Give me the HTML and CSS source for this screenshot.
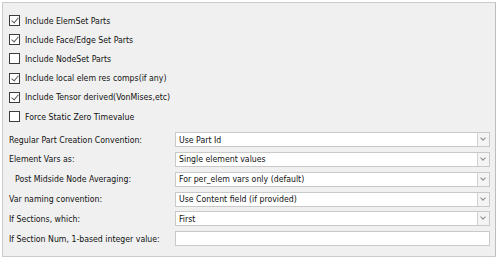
FILE: index.html
```html
<!DOCTYPE html>
<html lang="en">
<head>
    <meta charset="UTF-8">
    <title>Reader options</title>
    <link rel="stylesheet" href="styles.css">
</head>
<body>
    <div class="frame">
        <ul class="checks">
            <li><span class="box checked"></span>Include ElemSet Parts</li>
            <li><span class="box checked"></span>Include Face/Edge Set Parts</li>
            <li><span class="box"></span>Include NodeSet Parts</li>
            <li><span class="box checked"></span>Include local elem res comps(if any)</li>
            <li><span class="box checked"></span>Include Tensor derived(VonMises,etc)</li>
            <li><span class="box"></span>Force Static Zero Timevalue</li>
        </ul>

        <div class="form">
            <label>Regular Part Creation Convention:</label>
            <div class="combo"><span>Use Part Id</span><i></i></div>

            <label>Element Vars as:</label>
            <div class="combo"><span>Single element values</span><i></i></div>

            <label class="indent">Post Midside Node Averaging:</label>
            <div class="combo"><span>For per_elem vars only (default)</span><i></i></div>

            <label>Var naming convention:</label>
            <div class="combo"><span>Use Content field (if provided)</span><i></i></div>

            <label>If Sections, which:</label>
            <div class="combo"><span>First</span><i></i></div>

            <label>If Section Num, 1-based integer value:</label>
            <div class="edit"></div>
        </div>
    </div>
</body>
</html>
```

FILE: styles.css
```css
*{
    margin: 0;
    padding: 0;
    box-sizing: border-box;
    list-style: none;
}
body{
    width: 500px;
    height: 262px;
    background: #fff;
    font-family: "DejaVu Sans Condensed", "DejaVu Sans", sans-serif;
    font-stretch: condensed;
    font-size: 8.7px;
    color: #111;
}
.frame{
    margin: 2px;
    width: 494px;
    height: 255px;
    background: #f0f0f0;
    border: 1px solid #cbcbcb;
    border-right-color: #bdbdbd;
    padding: 8px 5px 0 6px;
}
.checks li{
    height: 19.2px;
    display: flex;
    align-items: center;
}
.box{
    width: 11px;
    height: 11px;
    border: 1px solid #3c3c3c;
    background: #fff;
    margin-right: 5px;
    position: relative;
}
.box.checked::after{
    content: "";
    position: absolute;
    left: 3px;
    top: 0;
    width: 3px;
    height: 6px;
    border: solid #5a5a5a;
    border-width: 0 1px 1px 0;
    transform: rotate(40deg);
}
.form{
    margin-top: 6px;
    display: grid;
    grid-template-columns: 166px 315px;
    grid-auto-rows: 15px;
    row-gap: 4.8px;
    align-items: center;
}
.indent{
    padding-left: 6px;
}
.combo, .edit{
    height: 15px;
    background: #fff;
    border: 1px solid #c9c9c9;
    display: flex;
    align-items: center;
}
.combo span{
    flex: 1;
    padding-left: 3px;
}
.combo i{
    width: 12px;
    height: 13px;
    border-left: 1px solid #d2d2d2;
    background: #f4f4f4;
    position: relative;
}
.combo i::after{
    content: "";
    position: absolute;
    left: 3px;
    top: 3px;
    width: 3px;
    height: 3px;
    border: solid #8a8a8a;
    border-width: 0 1px 1px 0;
    transform: rotate(45deg);
}
```
